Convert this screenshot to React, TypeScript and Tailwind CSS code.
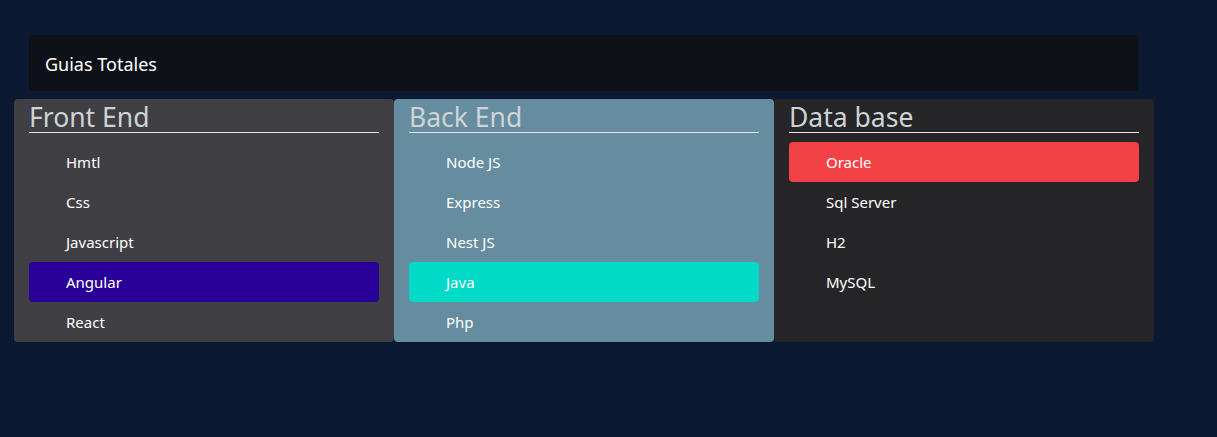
type Guide = {
  title: string;
  bg: string;
  items: string[];
  active: number;
  activeBg: string;
};

const GUIDES: Guide[] = [
  {
    title: "Front End",
    bg: "bg-[#403f44]",
    items: ["Hmtl", "Css", "Javascript", "Angular", "React"],
    active: 3,
    activeBg: "bg-[#2a0198]",
  },
  {
    title: "Back End",
    bg: "bg-[#668d9f]",
    items: ["Node JS", "Express", "Nest JS", "Java", "Php"],
    active: 3,
    activeBg: "bg-[#00dac7]",
  },
  {
    title: "Data base",
    bg: "bg-[#262628]",
    items: ["Oracle", "Sql Server", "H2", "MySQL"],
    active: 0,
    activeBg: "bg-[#f24246]",
  },
];

function GuideCard({ guide }: { guide: Guide }) {
  return (
    <div className={`w-[380px] h-[243px] rounded-[4px] px-[15px] ${guide.bg}`}>
      <h2 className="h-[34px] border-b border-[#e6e6e6] text-[26.5px] leading-[36px] text-[#cfd3d6] font-normal">
        {guide.title}
      </h2>
      <ul className="mt-[9px]">
        {guide.items.map((item, i) => (
          <li
            key={item}
            className={`h-[40px] flex items-center pl-[37px] text-[15px] text-white rounded-[4px] ${
              i === guide.active ? guide.activeBg : ""
            }`}
          >
            {item}
          </li>
        ))}
      </ul>
    </div>
  );
}

export default function App() {
  return (
    <div
      className="min-h-screen bg-[#0b1932] pt-[35px]"
      style={{ fontFamily: '"Noto Sans", "Open Sans", sans-serif' }}
    >
      <div className="ml-[29px] w-[1109px] h-[56px] rounded-[4px] bg-[#0e1118] flex items-center pt-[3px] px-4 text-[18px] text-white">
        Guias Totales
      </div>
      <div className="ml-[14px] mt-[8px] flex">
        {GUIDES.map((g) => (
          <GuideCard key={g.title} guide={g} />
        ))}
      </div>
    </div>
  );
}
